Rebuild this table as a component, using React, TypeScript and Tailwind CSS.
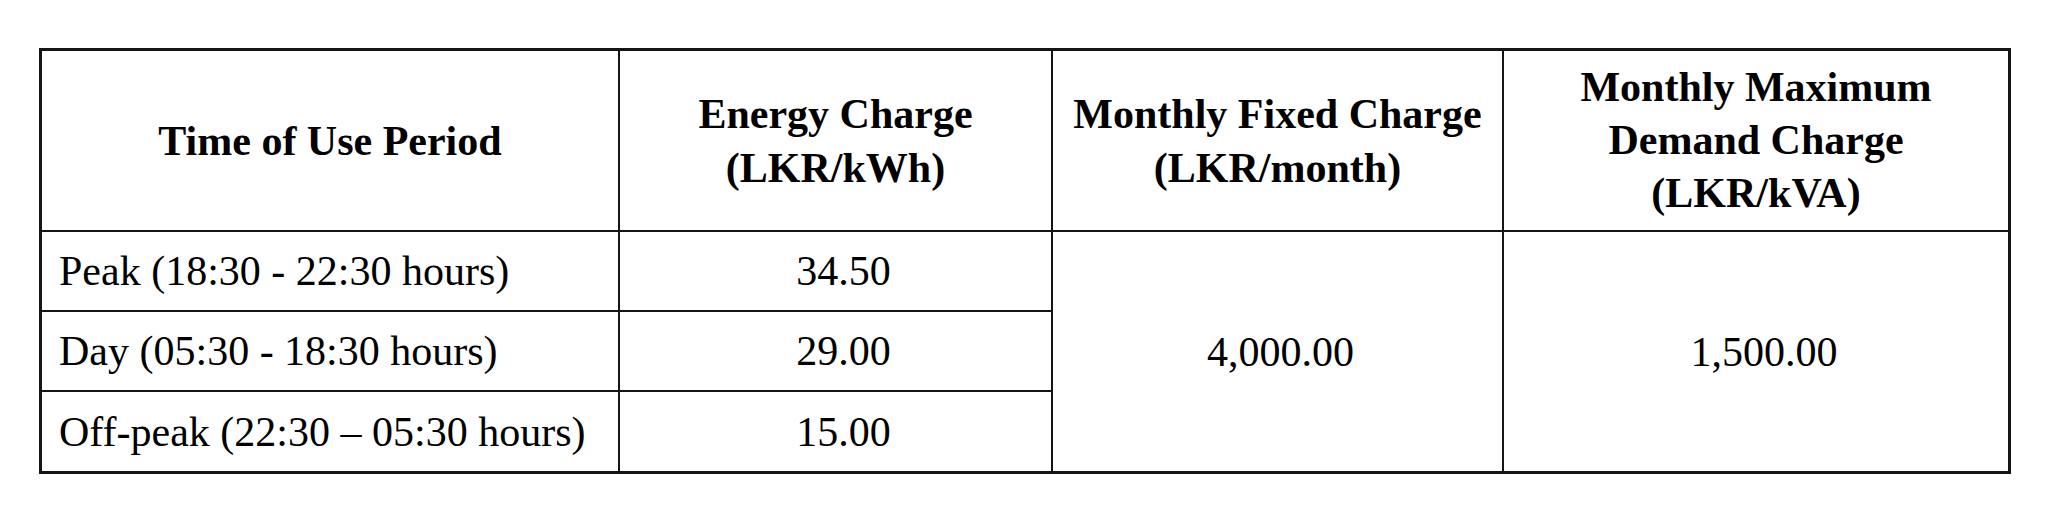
import React from "react";

const serif = { fontFamily: '"Liberation Serif", "Times New Roman", serif' };

export default function App() {
  return (
    <div className="w-[2048px] h-[529px] bg-white pl-[39px] pt-[48px]" style={serif}>
      <table className="table-fixed border-separate border-spacing-0 border-[3px] border-[#151515] text-black text-[42px] w-[1972px]">
        <colgroup>
          <col className="w-[578px]" />
          <col className="w-[433px]" />
          <col className="w-[451px]" />
          <col className="w-[504px]" />
        </colgroup>
        <thead>
          <tr className="h-[181px]">
            <th className="border-r-2 border-b-2 border-[#151515] font-bold text-center align-middle leading-[54px] p-0">
              Time of Use Period
            </th>
            <th className="border-r-2 border-b-2 border-[#151515] font-bold text-center align-middle leading-[54px] p-0">
              Energy Charge
              <br />
              (LKR/kWh)
            </th>
            <th className="border-r-2 border-b-2 border-[#151515] font-bold text-center align-middle leading-[54px] p-0">
              Monthly Fixed Charge
              <br />
              (LKR/month)
            </th>
            <th className="border-b-2 border-[#151515] font-bold text-center align-middle leading-[53px] p-0">
              Monthly Maximum
              <br />
              Demand Charge
              <br />
              (LKR/kVA)
            </th>
          </tr>
        </thead>
        <tbody>
          <tr className="h-[80px]">
            <td className="border-r-2 border-b-2 border-[#151515] pl-[17px] align-middle leading-none">
              Peak (18:30 - 22:30 hours)
            </td>
            <td className="border-r-2 border-b-2 border-[#151515] pl-[16px] text-center align-middle leading-none">
              34.50
            </td>
            <td rowSpan={3} className="border-r-2 border-[#151515] pl-[6px] text-center align-middle leading-none">
              4,000.00
            </td>
            <td rowSpan={3} className="pl-[16px] text-center align-middle leading-none">
              1,500.00
            </td>
          </tr>
          <tr className="h-[80px]">
            <td className="border-r-2 border-b-2 border-[#151515] pl-[17px] align-middle leading-none">
              Day (05:30 - 18:30 hours)
            </td>
            <td className="border-r-2 border-b-2 border-[#151515] pl-[16px] text-center align-middle leading-none">
              29.00
            </td>
          </tr>
          <tr className="h-[79px]">
            <td className="border-r-2 border-[#151515] pl-[17px] align-middle leading-none">
              Off-peak (22:30 – 05:30 hours)
            </td>
            <td className="border-r-2 border-[#151515] pl-[16px] text-center align-middle leading-none">
              15.00
            </td>
          </tr>
        </tbody>
      </table>
    </div>
  );
}
